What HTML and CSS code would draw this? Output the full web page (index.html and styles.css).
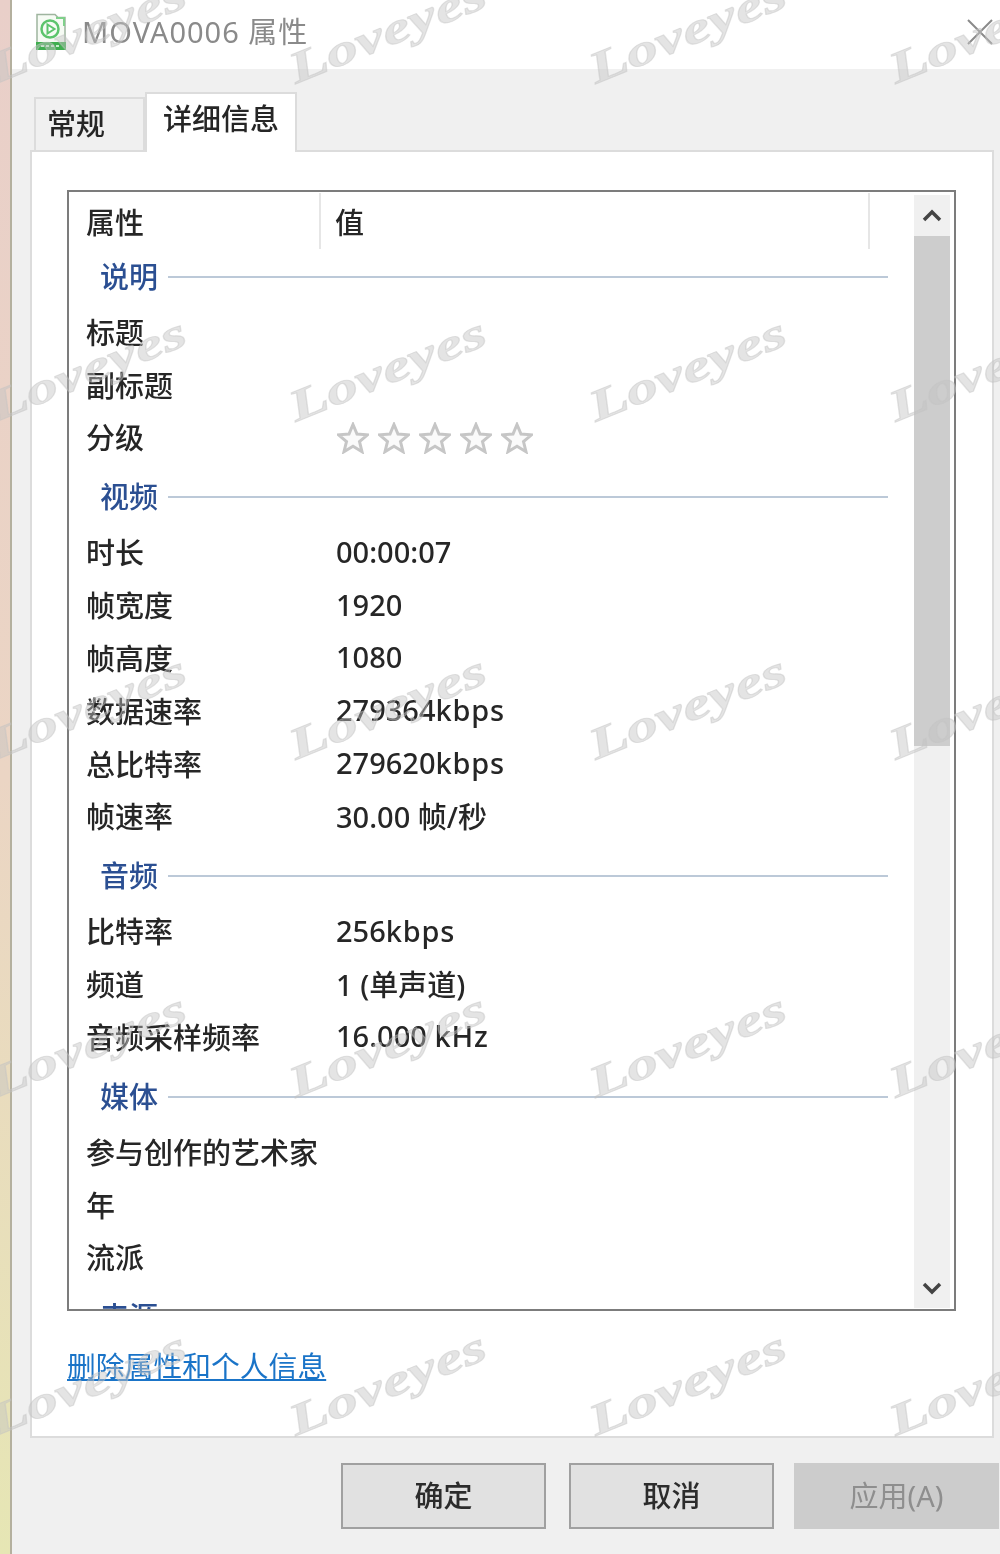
FILE: index.html
```html
<!DOCTYPE html>
<html lang="zh-CN">
<head>
    <meta charset="UTF-8">
    <title>MOVA0006 属性</title>
    <link rel="stylesheet" href="styles.css">
</head>
<body>

<div class="screen">
    <div class="edge"></div>

    <div class="window">
        <div class="titlebar">
            <svg class="file-icon" viewBox="0 0 32 38" fill="none">
                <path d="M2 1.5h18l3 3h7v27H2z" stroke="#9fb59f" stroke-width="1.5" fill="#f6fbf4"/>
                <path d="M21 5h8v8" stroke="#7fd08a" stroke-width="2"/>
                <circle cx="15" cy="16" r="8.5" stroke="#5cc46c" stroke-width="2.5"/>
                <path d="M12.5 11.5l7 4.5-7 4.5z" stroke="#5cc46c" stroke-width="2" fill="#fff"/>
                <rect x="1" y="29" width="30" height="8" fill="#3fae4f"/>
                <path d="M6 33h20" stroke="#c4eccb" stroke-width="2" stroke-dasharray="3 2"/>
            </svg>
            <span class="title">MOVA0006 属性</span>
            <svg class="close-icon" viewBox="0 0 26 26">
                <path d="M1 1l24 24M25 1L1 25" stroke="#8a8a8a" stroke-width="2" fill="none"/>
            </svg>
        </div>

        <div class="tabs">
            <div class="tab">常规</div>
            <div class="tab tab-active">详细信息</div>
        </div>

        <div class="panel">
            <div class="listbox">
                <div class="list-main">
                    <div class="list-head">
                        <div class="head-name">属性</div>
                        <div class="head-value">值</div>
                    </div>

                    <div class="group"><span>说明</span></div>
                    <div class="row"><span>标题</span><span></span></div>
                    <div class="row"><span>副标题</span><span></span></div>
                    <div class="row">
                        <span>分级</span>
                        <span class="stars">
                            <svg viewBox="0 0 32 32"><use href="#star"/></svg>
                            <svg viewBox="0 0 32 32"><use href="#star"/></svg>
                            <svg viewBox="0 0 32 32"><use href="#star"/></svg>
                            <svg viewBox="0 0 32 32"><use href="#star"/></svg>
                            <svg viewBox="0 0 32 32"><use href="#star"/></svg>
                        </span>
                    </div>

                    <div class="group"><span>视频</span></div>
                    <div class="row"><span>时长</span><span>00:00:07</span></div>
                    <div class="row"><span>帧宽度</span><span>1920</span></div>
                    <div class="row"><span>帧高度</span><span>1080</span></div>
                    <div class="row"><span>数据速率</span><span>279364<span class="unit">kbps</span></span></div>
                    <div class="row"><span>总比特率</span><span>279620<span class="unit">kbps</span></span></div>
                    <div class="row"><span>帧速率</span><span>30.00 帧/秒</span></div>

                    <div class="group"><span>音频</span></div>
                    <div class="row"><span>比特率</span><span>256<span class="unit">kbps</span></span></div>
                    <div class="row"><span>频道</span><span>1 (单声道)</span></div>
                    <div class="row"><span>音频采样频率</span><span>16.000 <span class="unit">kHz</span></span></div>

                    <div class="group"><span>媒体</span></div>
                    <div class="row"><span>参与创作的艺术家</span><span></span></div>
                    <div class="row"><span>年</span><span></span></div>
                    <div class="row"><span>流派</span><span></span></div>

                    <div class="group"><span>来源</span></div>
                </div>

                <div class="scrollbar">
                    <div class="scroll-btn">
                        <svg viewBox="0 0 20 14"><path d="M2 11l8-8 8 8" stroke="#444" stroke-width="3.500" fill="none"/></svg>
                    </div>
                    <div class="scroll-thumb"></div>
                    <div class="scroll-track"></div>
                    <div class="scroll-btn">
                        <svg viewBox="0 0 20 14"><path d="M2 3l8 8 8-8" stroke="#444" stroke-width="3.500" fill="none"/></svg>
                    </div>
                </div>
            </div>

            <a class="remove-link" href="#">删除属性和个人信息</a>
        </div>

        <div class="footer">
            <button class="btn">确定</button>
            <button class="btn">取消</button>
            <button class="btn btn-disabled">应用(A)</button>
        </div>
    </div>

    <!-- watermark laid over the whole screenshot -->
    <div class="watermarks">
        <span>Loveyes</span><span>Loveyes</span><span>Loveyes</span><span>Loveyes</span>
        <span>Loveyes</span><span>Loveyes</span><span>Loveyes</span><span>Loveyes</span>
        <span>Loveyes</span><span>Loveyes</span><span>Loveyes</span><span>Loveyes</span>
        <span>Loveyes</span><span>Loveyes</span><span>Loveyes</span><span>Loveyes</span>
        <span>Loveyes</span><span>Loveyes</span><span>Loveyes</span><span>Loveyes</span>
    </div>
</div>

<svg class="defs" width="0" height="0">
    <symbol id="star" viewBox="0 0 32 32">
        <path d="M16 2.500l4 9.500 10.500.8-8 6.700 2.500 10.200-9-5.500-9 5.500 2.500-10.200-8-6.700 10.500-.8z" fill="#fafafa" stroke="#c6c6c6" stroke-width="3"/>
    </symbol>
</svg>

</body>
</html>
```

FILE: styles.css
```css
* {
    margin: 0;
    padding: 0;
    box-sizing: border-box;
}

html, body {
    width: 1000px;
    height: 1554px;
    overflow: hidden;
}

body {
    font-family: "Noto Sans", "Noto Sans CJK SC", sans-serif;
    font-size: 29px;
    font-weight: 500;
    color: #262626;
    background: #fff;
}

.screen {
    position: relative;
    display: flex;
    width: 1000px;
    height: 1554px;
    overflow: hidden;
    filter: blur(0.7px);
}

.edge {
    flex: 0 0 12px;
    background: linear-gradient(to bottom, #e9cfc9, #ebd5c4 50%, #e6e6b4);
    border-right: 2px solid #b4b09e;
}

.window {
    flex: 1;
    min-width: 0;
    background: #f0f0f0;
}

.titlebar {
    display: flex;
    align-items: center;
    height: 69px;
    padding: 0 7px 5px 23px;
    background: #fff;
}

.file-icon {
    width: 32px;
    height: 38px;
}

.title {
    margin-left: 15px;
    padding-bottom: 4px;
    font-weight: 400;
    letter-spacing: 1px;
    color: #8a8a8a;
}

.close-icon {
    width: 26px;
    height: 26px;
    margin-left: auto;
}

.tabs {
    display: flex;
    align-items: flex-end;
    height: 81px;
    padding-left: 22px;
}

.tab {
    width: 111px;
    height: 53px;
    padding-left: 11px;
    line-height: 50px;
    background: #f0f0f0;
    border: 2px solid #dcdcdc;
    border-bottom: none;
}

.tab-active {
    position: relative;
    z-index: 1;
    width: 152px;
    height: 60px;
    margin-bottom: -2px;
    padding-left: 16px;
    line-height: 50px;
    background: #fff;
    border-left: 2px solid #dcdcdc;
}

.panel {
    height: 1288px;
    margin: 0 6px 0 18px;
    padding: 38px 36px 0 35px;
    background: #fff;
    border: 2px solid #dcdcdc;
}

.listbox {
    display: flex;
    height: 1121px;
    overflow: hidden;
    background: #fff;
    border: 2px solid #7c7c7c;
}

.list-main {
    flex: 1;
    min-width: 0;
    height: 1117px;
    overflow: hidden;
}

.list-head {
    display: flex;
    height: 57px;
    padding: 1px 0 0 17px;
}

.head-name {
    width: 235px;
    height: 56px;
    line-height: 60px;
    border-right: 2px solid #e6e6e6;
}

.head-value {
    width: 549px;
    height: 56px;
    padding-left: 14px;
    line-height: 60px;
    border-right: 2px solid #e6e6e6;
}

.group {
    display: flex;
    align-items: center;
    gap: 10px;
    height: 56px;
    margin: 4.600px 26px 1.500px 31px;
    color: #2b4f92;
}

.group span {
    padding-bottom: 4px;
}

.list-head + .group {
    margin-top: 0;
}

.group::after {
    content: "";
    flex: 1;
    height: 2px;
    background: #bcc9d8;
}

.row {
    display: grid;
    grid-template-columns: 250px 1fr;
    align-items: center;
    height: 52.800px;
    padding: 0 0 4px 17px;
    white-space: nowrap;
}

.unit {
    letter-spacing: 0.8px;
}

.stars {
    display: flex;
    gap: 9px;
    margin-top: 4px;
    padding-left: 1px;
}

.stars svg {
    width: 32px;
    height: 32px;
}

.defs {
    position: absolute;
}

.scrollbar {
    display: flex;
    flex-direction: column;
    flex: 0 0 36px;
    height: 1113px;
    margin: 3px 4px 0 0;
    background: #f0f0f0;
}

.scroll-btn {
    display: flex;
    align-items: center;
    justify-content: center;
    height: 41px;
}

.scroll-btn svg {
    width: 20px;
    height: 14px;
}

.scroll-thumb {
    height: 510px;
    background: #cdcdcd;
}

.scroll-track {
    flex: 1;
}

.remove-link {
    display: block;
    margin-top: 34px;
    line-height: 42px;
    font-size: 28.800px;
    font-weight: 400;
    color: #1a74c8;
    text-decoration: underline;
}

.footer {
    display: flex;
    gap: 23px;
    padding: 25px 0 0 329px;
}

.btn {
    flex: 0 0 205px;
    height: 66px;
    padding-bottom: 4px;
    font-family: inherit;
    font-size: 29px;
    font-weight: 500;
    color: #2c2c2c;
    background: #e1e1e1;
    border: 2px solid #a0a0a0;
}

.btn-disabled {
    margin-left: -3px;
    font-weight: 400;
    color: #8e8e8e;
    background: #cccccc;
    border-color: #cccccc;
}

.watermarks {
    position: absolute;
    top: -138px;
    left: -63px;
    display: grid;
    grid-template-columns: repeat(4, 300px);
    grid-auto-rows: 338px;
    pointer-events: none;
}

.watermarks span {
    display: flex;
    align-items: center;
    justify-content: center;
    font-family: "Liberation Serif", serif;
    font-size: 44px;
    font-weight: bold;
    font-style: italic;
    color: rgba(195, 195, 195, 0.45);
    -webkit-text-stroke: 1px rgba(195, 195, 195, 0.45);
    transform: rotate(-22deg) scaleX(1.45);
}
```
